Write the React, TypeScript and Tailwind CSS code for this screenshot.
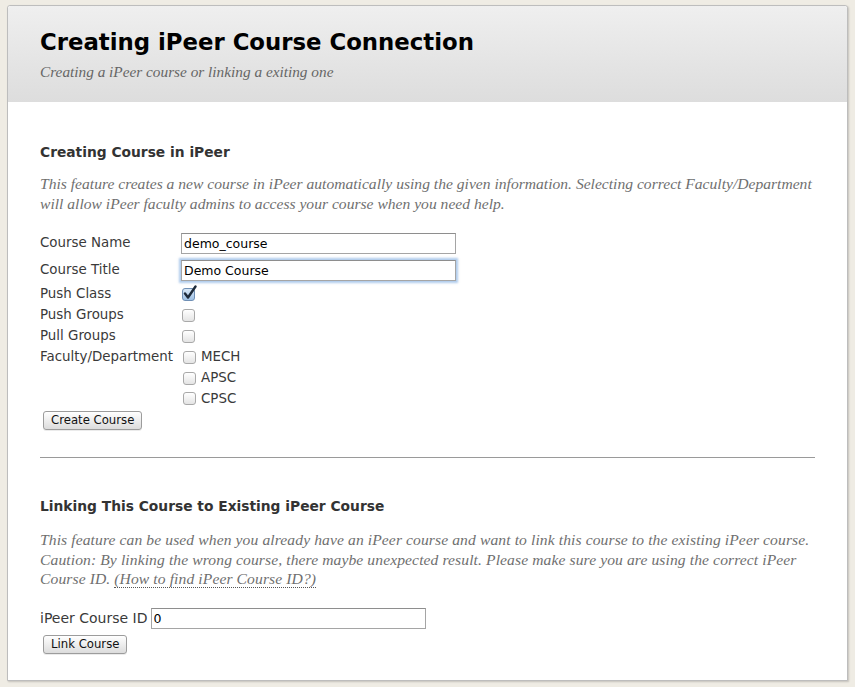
import React from 'react';

const sans = "font-['DejaVu_Sans',sans-serif]";
const serif = "font-['Liberation_Serif',serif] italic";

function Box({ checked = false }: { checked?: boolean }) {
  return (
    <span className="relative inline-block w-[13px] h-[13px] shrink-0">
      <span
        className={
          checked
            ? 'absolute inset-0 rounded-[3px] border border-[#6f8fb5] bg-gradient-to-b from-[#d9e8f7] to-[#9ec0e4]'
            : 'absolute inset-0 rounded-[3px] border border-[#a9a9a9] bg-gradient-to-b from-[#ffffff] to-[#e4e4e4]'
        }
      />
      {checked && (
        <svg className="absolute left-[1px] top-[-3px]" width="14" height="15" viewBox="0 0 14 15">
          <path d="M2 8.5 L5 12.5 L12.5 1.5" fill="none" stroke="#1d2a3a" strokeWidth="2.4" strokeLinecap="round" strokeLinejoin="round" />
        </svg>
      )}
    </span>
  );
}

function Button({ children }: { children: React.ReactNode }) {
  return (
    <button className={`${sans} h-[19px] px-[7px] text-[11.7px] leading-[17px] text-[#111] rounded-[3px] border border-[#9c9c9c] bg-gradient-to-b from-[#ffffff] to-[#dcdcdc] shadow-[0_1px_0_rgba(0,0,0,0.08)]`}>
      {children}
    </button>
  );
}

export default function App() {
  const label = `${sans} text-[13.4px] text-[#3a3a3a]`;
  const input =
    `${sans} h-[21px] w-[275px] px-[2px] text-[12.5px] text-black bg-white border border-[#a5a5a5] border-t-[#8e8e8e] outline-none`;
  const desc = `${serif} text-[15.6px] leading-[19.5px] text-[#6f6f6f] whitespace-nowrap`;

  return (
    <div className="min-h-[687px] bg-[#efece4] px-[7px] pt-[5px] pb-[7px]">
      <div className="rounded-t-[3px] border border-[#bdbdbd] bg-white shadow-[1px_1px_2px_rgba(0,0,0,0.18)]">
        {/* header */}
        <div className="h-[96px] rounded-t-[3px] bg-gradient-to-b from-[#efefef] to-[#dddddd] px-[32px] pt-[21px]">
          <h1 className={`${sans} text-[22.8px] leading-[30px] font-bold text-black`}>
            Creating iPeer Course Connection
          </h1>
          <p className={`${serif} mt-[5px] text-[15.3px] leading-[20px] text-[#666]`}>
            Creating a iPeer course or linking a exiting one
          </p>
        </div>

        <div className="px-[32px] pt-[40px] pb-[26px]">
          <h2 className={`${sans} text-[13.8px] leading-[20px] font-bold text-[#333]`}>
            Creating Course in iPeer
          </h2>
          <p className={`${desc} mt-[12px]`}>
            This feature creates a new course in iPeer automatically using the given information. Selecting correct Faculty/Department
            <br />
            will allow iPeer faculty admins to access your course when you need help.
          </p>

          <div className="mt-[17px] grid grid-cols-[141px_1fr]">
            <div className={`${label} h-[27px] flex items-center`}>Course Name</div>
            <div className="h-[27px] flex items-center">
              <input className={input} defaultValue="demo_course" />
            </div>
            <div className={`${label} h-[27px] flex items-center`}>Course Title</div>
            <div className="h-[27px] flex items-center">
              <input
                className={`${input} border-[#7ba3d0] border-t-[#7ba3d0] shadow-[0_0_2px_2px_rgba(110,160,220,0.55)]`}
                defaultValue="Demo Course"
              />
            </div>
            <div className={`${label} h-[21px] flex items-center`}>Push Class</div>
            <div className="h-[21px] flex items-center pl-[1px]">
              <Box checked />
            </div>
            <div className={`${label} h-[21px] flex items-center`}>Push Groups</div>
            <div className="h-[21px] flex items-center pl-[1px]">
              <Box />
            </div>
            <div className={`${label} h-[21px] flex items-center`}>Pull Groups</div>
            <div className="h-[21px] flex items-center pl-[1px]">
              <Box />
            </div>
            <div className={`${label} h-[21px] flex items-center`}>Faculty/Department</div>
            <div className="flex flex-col">
              {['MECH', 'APSC', 'CPSC'].map((d, i) => (
                <div key={d} className={`${i === 0 ? 'h-[21px]' : 'h-[20.5px]'} flex items-center gap-[5px] pl-[2px]`}>
                  <Box />
                  <span className={label}>{d}</span>
                </div>
              ))}
            </div>
          </div>

          <div className="mt-[2px] flex pl-[3px]">
            <Button>Create Course</Button>
          </div>

          <div className="mt-[27px] border-t border-[#9a9a9a]" />

          <h2 className={`${sans} mt-[38px] text-[13.8px] leading-[20px] font-bold text-[#333]`}>
            Linking This Course to Existing iPeer Course
          </h2>
          <p className={`${desc} mt-[14px] tracking-[0.1px]`}>
            This feature can be used when you already have an iPeer course and want to link this course to the existing iPeer course.
            <br />
            Caution: By linking the wrong course, there maybe unexpected result. Please make sure you are using the correct iPeer
            <br />
            Course ID.{' '}
            <a className="border-b border-dotted border-[#555] text-[#6f6f6f]">(How to find iPeer Course ID?)</a>
          </p>

          <div className="mt-[19px] flex items-center gap-[3px]">
            <span className={`${sans} text-[14px] text-[#3a3a3a]`}>iPeer Course ID</span>
            <input className={input} defaultValue="0" />
          </div>
          <div className="mt-[6px] flex pl-[3px]">
            <Button>Link Course</Button>
          </div>
        </div>
      </div>
    </div>
  );
}
